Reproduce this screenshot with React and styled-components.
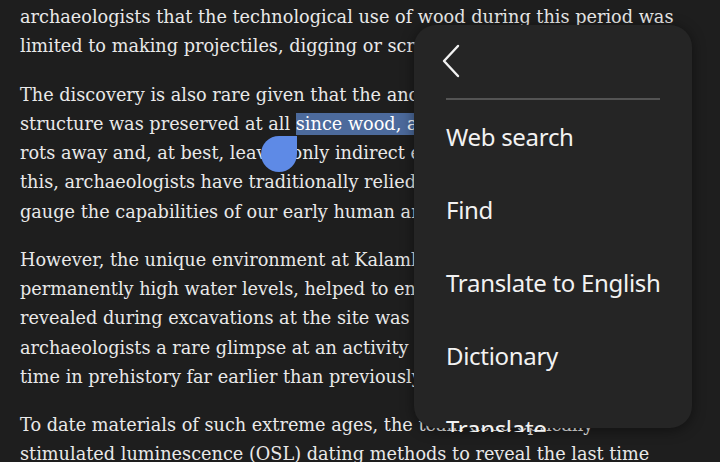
import React from "react";
import styled, { createGlobalStyle } from "styled-components";

const GlobalStyle = createGlobalStyle`
	html, body {
		margin: 0;
		padding: 0;
		background: #1e1e1e;
	}
	body {
		width: 720px;
		height: 462px;
		overflow: hidden;
	}
`;

const Screen = styled.div`
	position: relative;
	width: 720px;
	height: 462px;
	overflow: hidden;
	background: #1e1e1e;
`;

const Article = styled.div`
	padding: 3px 0 0 20px;
	font-family: "DejaVu Serif", "Liberation Serif", serif;
	font-size: 17.7px;
	line-height: 29.25px;
	color: #e9e9e9;
`;

const Paragraph = styled.p`
	margin: 0 0 19px;
`;

const Line = styled.span`
	display: block;
	white-space: nowrap;
`;

const Selected = styled.span`
	position: relative;
	padding: 1px 0;
	background: #4c6a9c;
	color: #ffffff;
`;

const Handle = styled.span`
	position: absolute;
	right: calc(100% - 1px);
	top: calc(100% + 1px);
	width: 36px;
	height: 36px;
	background: #5e8ae6;
	border-radius: 50% 0 50% 50%;
`;

const Menu = styled.div`
	position: absolute;
	left: 414px;
	top: 25px;
	width: 278px;
	height: 407px;
	&::before {
		content: "";
		position: absolute;
		left: 0;
		right: 0;
		top: 0;
		bottom: 4px;
		background: #252525;
		border-radius: 22px;
		box-shadow: 0 2px 14px rgba(0, 0, 0, 0.45);
	}
`;

const MenuInner = styled.div`
	position: relative;
	height: 100%;
	display: flex;
	flex-direction: column;
	overflow: hidden;
	font-family: "Noto Sans", "Open Sans", sans-serif;
	color: #f2f2f2;
`;

const Header = styled.div`
	flex: 0 0 73px;
	padding-left: 28px;
	display: flex;
	align-items: center;
	svg {
		margin-top: -2px;
	}
`;

const Divider = styled.div`
	flex: 0 0 2px;
	margin: 0 32px;
	background: #545454;
`;

const Item = styled.div`
	flex: 0 0 73px;
	display: flex;
	align-items: center;
	padding-left: 32px;
	font-size: 24px;
	letter-spacing: -0.3px;
	white-space: nowrap;
`;

const BackIcon = () => (
	<svg width="20" height="34" viewBox="0 0 20 34">
		<polyline
			points="16,2 2,17 16,32"
			fill="none"
			stroke="#f2f2f2"
			strokeWidth="2.4"
			strokeLinecap="round"
			strokeLinejoin="round"
		/>
	</svg>
);

const items = ["Web search", "Find", "Translate to English", "Dictionary", "Translate"];

const App = () => {
	return (
		<Screen>
			<GlobalStyle />
			<Article>
				<Paragraph>
					<Line>archaeologists that the technological use of wood during this period was</Line>
					<Line>limited to making projectiles, digging or scraping sticks.</Line>
				</Paragraph>
				<Paragraph>
					<Line>The discovery is also rare given that the ancient wooden</Line>
					<Line>
						structure was preserved at all{" "}
						<Selected>
							<Handle />
							since wood, a natural material,
						</Selected>
					</Line>
					<Line>rots away and, at best, leaves only indirect evidence. Because of</Line>
					<Line>this, archaeologists have traditionally relied on stone tools to</Line>
					<Line>gauge the capabilities of our early human ancestors.</Line>
				</Paragraph>
				<Paragraph>
					<Line>However, the unique environment at Kalambo Falls, with its</Line>
					<Line>permanently high water levels, helped to ensure the wood</Line>
					<Line>revealed during excavations at the site was preserved, giving</Line>
					<Line>archaeologists a rare glimpse at an activity of early humans at a</Line>
					<Line>time in prehistory far earlier than previously thought.</Line>
				</Paragraph>
				<Paragraph>
					<Line>To date materials of such extreme ages, the team used optically</Line>
					<Line>stimulated luminescence (OSL) dating methods to reveal the last time</Line>
				</Paragraph>
			</Article>
			<Menu>
				<MenuInner>
					<Header>
						<BackIcon />
					</Header>
					<Divider />
					{items.map((label) => (
						<Item key={label}>{label}</Item>
					))}
				</MenuInner>
			</Menu>
		</Screen>
	);
};

export default App;
